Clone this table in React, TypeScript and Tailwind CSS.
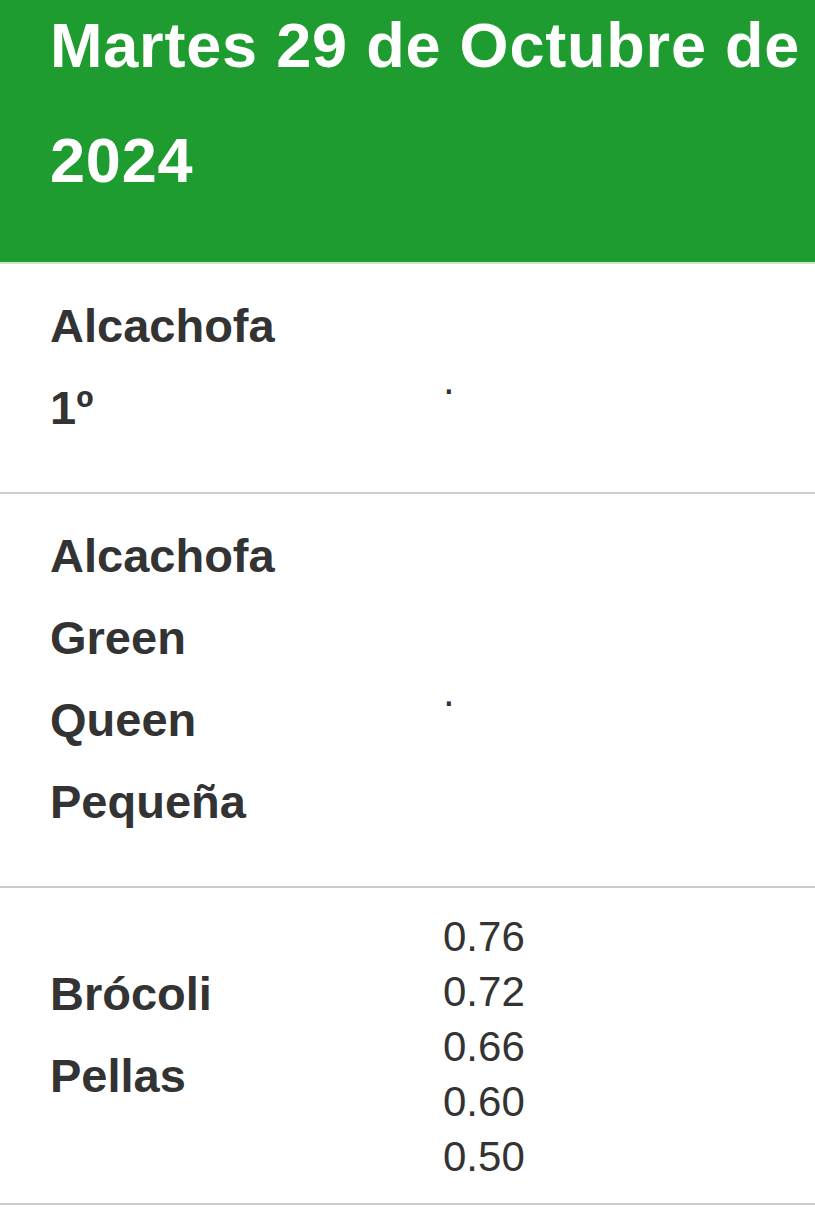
import React from "react";

type Row = { labels: string[]; values: string[] };

const rows: Row[] = [
  { labels: ["Alcachofa", "1º"], values: ["."] },
  { labels: ["Alcachofa", "Green", "Queen", "Pequeña"], values: ["."] },
  { labels: ["Brócoli", "Pellas"], values: ["0.76", "0.72", "0.66", "0.60", "0.50"] },
];

export default function App() {
  return (
    <div
      className="w-[815px] min-h-[1220px] bg-white text-[#333333] overflow-hidden"
      style={{ fontFamily: '"Liberation Sans", Arial, sans-serif' }}
    >
      <header className="h-[264px] bg-[#1f9c2f] border-b-2 border-[#c9e6cc] overflow-hidden">
        <h1 className="pl-[50px] pr-[10px] -mt-[12px] text-white font-bold text-[63px] tracking-[0.8px] leading-[115px]">
          Martes 29 de Octubre de 2024
        </h1>
      </header>
      {rows.map((row, i) => (
        <div
          key={i}
          className="flex items-center border-b-2 border-[#cccccc] pt-[21px] pb-[19px]"
        >
          <div className="w-[443px] shrink-0 pl-[50px]">
            <div className="mb-[24px] font-bold text-[47px] leading-[82px]">
              {row.labels.map((l, j) => (
                <div key={j}>{l}</div>
              ))}
            </div>
          </div>
          <div className="text-[42px] leading-[55px]">
            {row.values.map((v, j) => (
              <div key={j}>{v}</div>
            ))}
          </div>
        </div>
      ))}
    </div>
  );
}
